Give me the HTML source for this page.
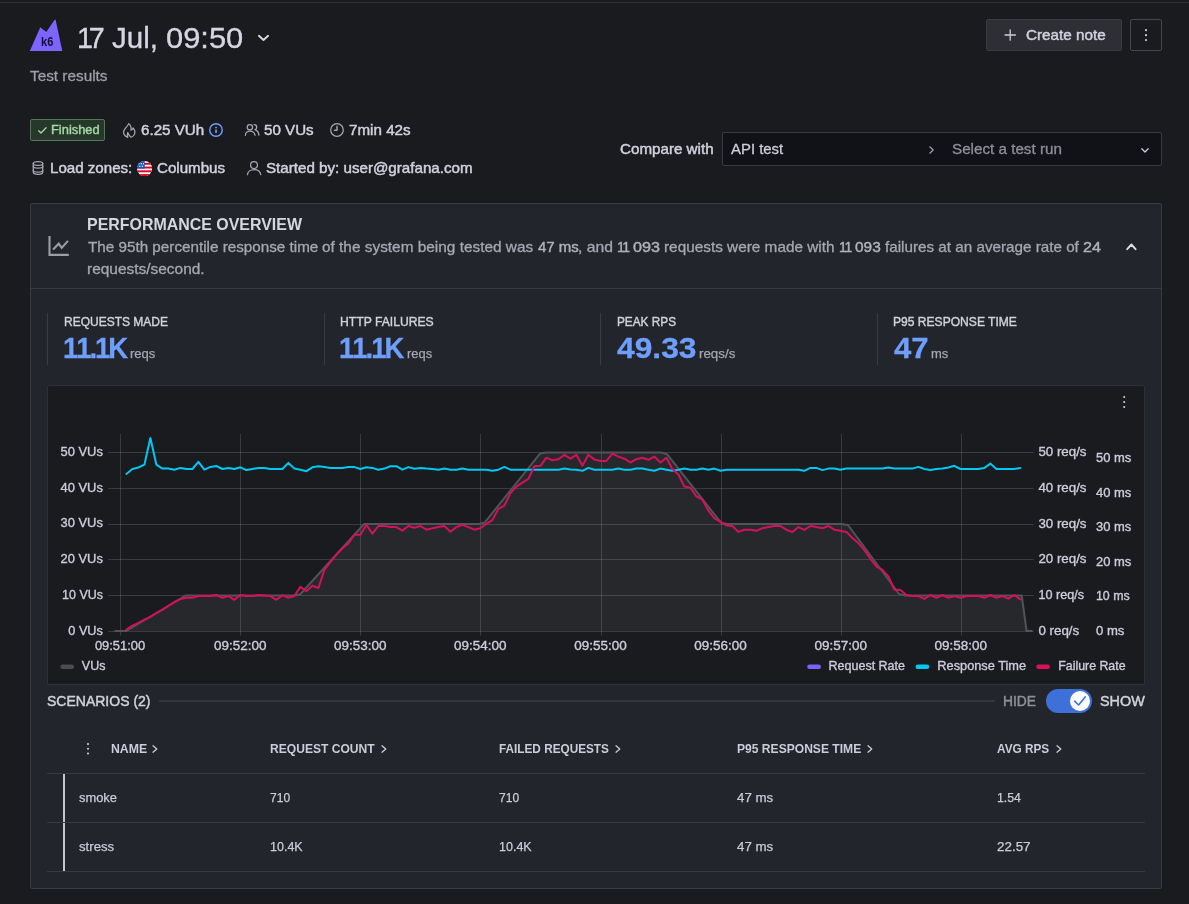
<!DOCTYPE html>
<html lang="en"><head><meta charset="utf-8"><title>Test results</title>
<style>
*{box-sizing:border-box;margin:0;padding:0}
html,body{width:1189px;height:904px;overflow:hidden}
body{background:#1a1b1f;font-family:"Liberation Sans",sans-serif;color:#ccccdc;position:relative;font-size:14px}
.a{position:absolute;white-space:nowrap;line-height:1}
.sec{color:#9d9ea9}
.b{font-weight:700}
svg{position:absolute;overflow:visible}
.ic{fill:none;stroke:#b4b5c2;stroke-width:1.3;stroke-linecap:round;stroke-linejoin:round}
.ax{font-size:12.7px;fill:#ccccdc;stroke:#ccccdc;stroke-width:0.35px;font-family:"Liberation Sans",sans-serif}
.th{font-size:12px;font-weight:700;color:#ccccdc;letter-spacing:.1px}
.td{font-size:12px;color:#ccccdc}
</style></head>
<body>
<div id="root" style="position:absolute;left:0;top:0;width:1189px;height:904px;will-change:transform">
<div class="a" style="left:0;top:2px;width:1189px;height:1px;background:#2f3137"></div>
<svg style="left:30px;top:20px" width="32" height="31" viewBox="0 0 32 31">
<path d="M-0.2 31 L10.3 7.2 L16.3 11.9 L24.6 -0.2 L25.6 -0.2 L32.3 31 Z" fill="#7d64ff"/>
<text x="11" y="25.6" textLength="12.3" lengthAdjust="spacingAndGlyphs" font-family="Liberation Sans, sans-serif" font-weight="700" font-size="13" fill="#15102e">k6</text>
</svg>
<div class="a" style="left:77.22px;top:22.90px;font-size:29.6px;color:#d5d6e2;transform-origin:0 0;transform:scaleX(0.9700);-webkit-text-stroke:0.35px #d5d6e2;">1<span style="margin-left:-4.29px">7</span></div>
<div class="a" style="left:111.72px;top:22.90px;font-size:29.6px;color:#d5d6e2;transform-origin:0 0;transform:scaleX(0.9984);-webkit-text-stroke:0.35px #d5d6e2;">Jul, </div>
<div class="a" style="left:165.92px;top:22.90px;font-size:29.6px;color:#d5d6e2;transform-origin:0 0;transform:scaleX(1.0432);-webkit-text-stroke:0.35px #d5d6e2;">09:50</div>
<svg style="left:258px;top:35px" width="11" height="6" viewBox="0 0 11 6"><path d="M0.900 0.800 L5.500 5 L10.100 0.800" fill="none" stroke="#d5d6e2" stroke-width="1.900" stroke-linecap="round" stroke-linejoin="round"/></svg>
<div class="a" style="left:30.21px;top:68.80px;font-size:14.8px;color:#9d9ea9;transform-origin:0 0;transform:scaleX(1.0359);-webkit-text-stroke:0.30px #9d9ea9;">Test results</div>
<div class="a" style="left:986px;top:19px;width:136px;height:32px;background:#2e2f35;border:1px solid #3a3b41;border-radius:2px"></div>
<svg style="left:1004px;top:29.200px" width="12" height="12" viewBox="0 0 12 12"><path d="M6.200 0.800V11.200M1 6H11.400" fill="none" stroke="#ccccdc" stroke-width="1.3" stroke-linecap="round"/></svg>
<div class="a" style="left:1026.01px;top:28.00px;font-size:14.8px;color:#d0d1dd;transform-origin:0 0;transform:scaleX(1.0323);-webkit-text-stroke:0.47px #d0d1dd;">Create note</div>
<div class="a" style="left:1130px;top:19px;width:32px;height:32px;border:1px solid #46474e;border-radius:2px"></div>
<svg style="left:1145px;top:29px" width="2" height="12" viewBox="0 0 2 12"><circle cx="1" cy="1.2" r="1.1" fill="#ccccdc"/><circle cx="1" cy="6.2" r="1.1" fill="#ccccdc"/><circle cx="1" cy="11.1" r="1.1" fill="#ccccdc"/></svg>
<div class="a" style="left:30px;top:119px;width:75px;height:22px;background:#27372b;border:1px solid #4b7a4e;border-radius:2px"></div>
<svg style="left:37.900px;top:126.600px" width="9" height="8" viewBox="0 0 9 8"><path d="M0.700 3.700 L3 6 L8.100 0.700" fill="none" stroke="#a3dba3" stroke-width="1.250" stroke-linecap="round" stroke-linejoin="round"/></svg>
<div class="a" style="left:50.79px;top:124.00px;font-size:12.68px;color:#a3dba3;transform-origin:0 0;transform:scaleX(1.0158);-webkit-text-stroke:0.41px #a3dba3;">Finished</div>
<div class="a" style="left:140.51px;top:122.80px;font-size:14.8px;color:#d0d1dd;transform-origin:0 0;transform:scaleX(1.0247);-webkit-text-stroke:0.47px #d0d1dd;">6.25 VUh</div>
<div class="a" style="left:263.91px;top:122.80px;font-size:14.8px;color:#d0d1dd;transform-origin:0 0;transform:scaleX(1.0227);-webkit-text-stroke:0.47px #d0d1dd;">50 VUs</div>
<div class="a" style="left:349.21px;top:122.80px;font-size:14.8px;color:#d0d1dd;transform-origin:0 0;transform:scaleX(1.0263);-webkit-text-stroke:0.47px #d0d1dd;">7min 42s</div>
<svg style="left:0;top:0" width="1189" height="904" viewBox="0 0 1189 904">
<g fill="none" stroke="#a6a7b4" stroke-width="1.25" stroke-linecap="round" stroke-linejoin="round">
<path transform="translate(123.3,123.1)" d="M5.4 0.5C4.6 2.6 2.6 4.2 1.3 6.200C0.100 8 0.100 10.400 1.300 12C2.100 13.100 3.300 13.800 4.500 14.200C3.900 12.600 3.900 10.800 4.500 9.400C4.900 10.900 5.700 12.200 7 13.400L7.900 14.100C9.600 13.700 10.900 12.400 11.400 10.600C11.900 8.600 11.300 6.400 9.800 4.900C9.400 5.900 8.800 6.700 7.700 7.200C8.200 4.800 7.400 2.300 5.400 0.500Z"/>
<circle cx="249.900" cy="127.200" r="2.650"/>
<path d="M245.400 135.300C245.400 132.800 247.400 131 249.900 131S254.800 132.800 255 135.300"/>
<path d="M254.100 124.700C255.600 124.700 256.700 125.800 256.700 127.200 256.700 128.400 256 129.300 255 129.700 257.200 130.600 258.700 132.500 258.900 135.100"/>
<circle cx="337" cy="130" r="6.300"/>
<path d="M337 126.300V130.200H334.500" stroke-width="1.400"/>
<ellipse cx="38" cy="163.400" rx="4.750" ry="1.900"/>
<path d="M33.250 163.400V172.300C33.250 173.400 35.400 174.300 38 174.300S42.750 173.400 42.750 172.300V163.400"/>
<path d="M33.250 166.300C33.250 167.400 35.400 168.200 38 168.200S42.750 167.400 42.750 166.300"/>
<path d="M33.250 170.200C33.250 171.300 35.400 172.100 38 172.100S42.750 171.300 42.750 170.200"/>
<circle cx="254" cy="165.100" r="3.450"/>
<path d="M247.500 174.600C247.700 171.600 250.500 169.600 254 169.600S260.300 171.600 260.700 174.600"/>
</g>
<circle cx="216" cy="130" r="6.250" fill="none" stroke="#6e9fff" stroke-width="1.400"/>
<rect x="215.200" y="129.400" width="1.700" height="3.700" rx="0.500" fill="#6e9fff"/><circle cx="216.050" cy="127.600" r="0.950" fill="#6e9fff"/>
</svg>
<div class="a" style="left:49.71px;top:160.71px;font-size:14.8px;color:#d0d1dd;transform-origin:0 0;transform:scaleX(1.0210);-webkit-text-stroke:0.47px #d0d1dd;">Load zones:</div>
<svg style="left:136.900px;top:160.900px" width="15.200" height="15.200" viewBox="0 0 15.200 15.200"><defs><clipPath id="fc"><circle cx="7.600" cy="7.600" r="7.600"/></clipPath></defs>
<g clip-path="url(#fc)"><rect width="15.200" height="15.200" fill="#f4f4f4"/>
<rect y="1.850" width="15.200" height="1.900" fill="#e0001f"/><rect y="5.600" width="15.200" height="1.900" fill="#e0001f"/><rect y="9.350" width="15.200" height="1.900" fill="#e0001f"/><rect y="13.100" width="15.200" height="2.100" fill="#e0001f"/>
<rect width="7.700" height="7.550" fill="#1256c4"/><rect x="1.300" y="2" width="1.300" height="1.300" fill="#e8eefa"/><rect x="3.800" y="2" width="1.300" height="1.300" fill="#e8eefa"/><rect x="6" y="2" width="1" height="1.300" fill="#e8eefa"/><rect x="2.200" y="4.600" width="1.300" height="1.300" fill="#e8eefa"/><rect x="4.800" y="4.600" width="1.300" height="1.300" fill="#e8eefa"/></g></svg>
<div class="a" style="left:157.31px;top:160.71px;font-size:14.8px;color:#d0d1dd;transform-origin:0 0;transform:scaleX(1.0211);-webkit-text-stroke:0.47px #d0d1dd;">Columbus</div>
<div class="a" style="left:266.11px;top:160.71px;font-size:14.8px;color:#d0d1dd;transform-origin:0 0;transform:scaleX(1.0241);-webkit-text-stroke:0.47px #d0d1dd;">Started by: user@grafana.com</div>
<div class="a" style="left:620.11px;top:142.10px;font-size:14.8px;color:#d0d1dd;transform-origin:0 0;transform:scaleX(1.0255);-webkit-text-stroke:0.47px #d0d1dd;">Compare with</div>
<div class="a" style="left:722px;top:132px;width:440px;height:34px;background:#111217;border:1px solid #3a3b42;border-radius:2px"></div>
<div class="a" style="left:730.61px;top:142.10px;font-size:14.8px;color:#ccccdc;transform-origin:0 0;transform:scaleX(1.0080);-webkit-text-stroke:0.30px #ccccdc;">API test</div>
<svg style="left:929px;top:146px" width="5" height="8" viewBox="0 0 5 8"><path d="M0.800 0.800L4.200 4 0.800 7.200" fill="none" stroke="#9d9ea9" stroke-width="1.200" stroke-linecap="round" stroke-linejoin="round"/></svg>
<div class="a" style="left:951.71px;top:142.10px;font-size:14.8px;color:#8e8f9a;transform-origin:0 0;transform:scaleX(1.0279);-webkit-text-stroke:0.30px #8e8f9a;">Select a test run</div>
<svg style="left:1141px;top:148px" width="8" height="5" viewBox="0 0 8 5"><path d="M0.800 0.800L4 4 7.200 0.800" fill="none" stroke="#ccccdc" stroke-width="1.300" stroke-linecap="round" stroke-linejoin="round"/></svg>
<div class="a" style="left:30px;top:203px;width:1132px;height:686px;background:#22252b;border:1px solid #383b42;border-radius:2px"></div>
<div class="a" style="left:31px;top:288px;width:1130px;height:1px;background:#373940"></div>
<svg style="left:0;top:0" width="1189" height="904" viewBox="0 0 1189 904"><g fill="none" stroke="#9c9da9" stroke-width="2.100"><path d="M49.500 236.100V254.850H68.800"/><path d="M53.800 248.700L58.700 243.700 61.700 247.900 67.300 241.700" stroke-linecap="square"/></g></svg>
<div class="a" style="left:86.92px;top:217.21px;font-size:16.91px;color:#d5d6e2;transform-origin:0 0;transform:scaleX(0.9429);font-weight:700;">PERFORMANCE OVERVIEW</div>
<div class="a" style="left:87.51px;top:240.00px;font-size:14.8px;color:#a6a7b3;transform-origin:0 0;transform:scaleX(1.0295);-webkit-text-stroke:0.30px #a6a7b3;">The 95th percentile response time </div>
<div class="a" style="left:322.11px;top:240.00px;font-size:14.8px;color:#a6a7b3;transform-origin:0 0;transform:scaleX(1.0395);-webkit-text-stroke:0.30px #a6a7b3;">of the system being tested was </div>
<div class="a" style="left:537.61px;top:240.00px;font-size:14.8px;color:#b0b1bd;transform-origin:0 0;transform:scaleX(1.0132);-webkit-text-stroke:0.44px #b0b1bd;">47 ms</div>
<div class="a" style="left:578.01px;top:240.00px;font-size:14.8px;color:#a6a7b3;transform-origin:0 0;transform:scaleX(1.0613);-webkit-text-stroke:0.30px #a6a7b3;">, and </div>
<div class="a" style="left:617.31px;top:240.00px;font-size:14.8px;color:#b0b1bd;transform-origin:0 0;transform:scaleX(0.9500);-webkit-text-stroke:0.44px #b0b1bd;">1<span style="margin-left:-2.69px">1</span></div>
<div class="a" style="left:632.61px;top:240.00px;font-size:14.8px;color:#b0b1bd;transform-origin:0 0;transform:scaleX(1.0948);-webkit-text-stroke:0.44px #b0b1bd;">093</div>
<div class="a" style="left:663.91px;top:240.00px;font-size:14.8px;color:#a6a7b3;transform-origin:0 0;transform:scaleX(1.0366);-webkit-text-stroke:0.30px #a6a7b3;">requests were made with </div>
<div class="a" style="left:838.71px;top:240.00px;font-size:14.8px;color:#b0b1bd;transform-origin:0 0;transform:scaleX(0.9500);-webkit-text-stroke:0.44px #b0b1bd;">1<span style="margin-left:-2.48px">1</span></div>
<div class="a" style="left:854.71px;top:240.00px;font-size:14.8px;color:#b0b1bd;transform-origin:0 0;transform:scaleX(1.0422);-webkit-text-stroke:0.44px #b0b1bd;">093</div>
<div class="a" style="left:884.61px;top:240.00px;font-size:14.8px;color:#a6a7b3;transform-origin:0 0;transform:scaleX(1.0290);-webkit-text-stroke:0.30px #a6a7b3;">failures at an average rate of </div>
<div class="a" style="left:1082.71px;top:240.00px;font-size:14.8px;color:#b0b1bd;transform-origin:0 0;transform:scaleX(1.0895);-webkit-text-stroke:0.44px #b0b1bd;">24</div>
<div class="a" style="left:87.01px;top:261.71px;font-size:14.8px;color:#a6a7b3;transform-origin:0 0;transform:scaleX(1.0437);-webkit-text-stroke:0.30px #a6a7b3;">requests/second.</div>
<svg style="left:1125.500px;top:243px" width="11" height="7.500" viewBox="0 0 11 7.500"><path d="M1.200 6.200L5.400 1.500 9.600 6.200" fill="none" stroke="#dcdde8" stroke-width="1.900" stroke-linecap="round" stroke-linejoin="round"/></svg>
<div class="a" style="left:47px;top:313px;width:1px;height:52px;background:#393b42"></div>
<div class="a" style="left:63.79px;top:315.81px;font-size:12.68px;color:#d0d1dd;transform-origin:0 0;transform:scaleX(0.9470);-webkit-text-stroke:0.41px #d0d1dd;">REQUESTS MADE</div>
<div class="a" style="left:62.82px;top:332.90px;font-size:29.6px;color:#6e9fff;transform-origin:0 0;transform:scaleX(0.9300);font-weight:700;-webkit-text-stroke:0.3px #6e9fff;">1<span style="margin-left:-2.22px">1</span><span style="margin-left:-2.22px">.</span><span style="margin-left:-2.22px">1</span><span style="margin-left:-2.22px">K</span></div>
<div class="a" style="left:130.39px;top:347.81px;font-size:12.68px;color:#a6a7b3;transform-origin:0 0;transform:scaleX(1.0292);-webkit-text-stroke:0.25px #a6a7b3;">reqs</div>
<div class="a" style="left:324px;top:313px;width:1px;height:52px;background:#393b42"></div>
<div class="a" style="left:340.19px;top:315.81px;font-size:12.68px;color:#d0d1dd;transform-origin:0 0;transform:scaleX(0.9599);-webkit-text-stroke:0.41px #d0d1dd;">HTTP FAILURES</div>
<div class="a" style="left:338.82px;top:332.90px;font-size:29.6px;color:#6e9fff;transform-origin:0 0;transform:scaleX(0.9300);font-weight:700;-webkit-text-stroke:0.3px #6e9fff;">1<span style="margin-left:-2.17px">1</span><span style="margin-left:-2.17px">.</span><span style="margin-left:-2.17px">1</span><span style="margin-left:-2.17px">K</span></div>
<div class="a" style="left:407.09px;top:347.81px;font-size:12.68px;color:#a6a7b3;transform-origin:0 0;transform:scaleX(1.0170);-webkit-text-stroke:0.25px #a6a7b3;">reqs</div>
<div class="a" style="left:600px;top:313px;width:1px;height:52px;background:#393b42"></div>
<div class="a" style="left:616.79px;top:315.81px;font-size:12.68px;color:#d0d1dd;transform-origin:0 0;transform:scaleX(0.9316);-webkit-text-stroke:0.41px #d0d1dd;">PEAK RPS</div>
<div class="a" style="left:617.32px;top:332.90px;font-size:29.6px;color:#6e9fff;transform-origin:0 0;transform:scaleX(1.0742);font-weight:700;-webkit-text-stroke:0.3px #6e9fff;">49.33</div>
<div class="a" style="left:699.29px;top:347.81px;font-size:12.68px;color:#a6a7b3;transform-origin:0 0;transform:scaleX(1.0538);-webkit-text-stroke:0.25px #a6a7b3;">reqs/s</div>
<div class="a" style="left:877px;top:313px;width:1px;height:52px;background:#393b42"></div>
<div class="a" style="left:893.49px;top:315.81px;font-size:12.68px;color:#d0d1dd;transform-origin:0 0;transform:scaleX(0.9528);-webkit-text-stroke:0.41px #d0d1dd;">P95 RESPONSE TIME</div>
<div class="a" style="left:894.32px;top:332.90px;font-size:29.6px;color:#6e9fff;transform-origin:0 0;transform:scaleX(1.0500);font-weight:700;-webkit-text-stroke:0.3px #6e9fff;">47</div>
<div class="a" style="left:931.29px;top:347.81px;font-size:12.68px;color:#a6a7b3;transform-origin:0 0;transform:scaleX(1.0228);-webkit-text-stroke:0.25px #a6a7b3;">ms</div>
<div class="a" style="left:47px;top:385px;width:1098px;height:300px;background:#1a1b1f;border:1px solid #2f3137;border-radius:2px"></div>
<svg style="left:0;top:0" width="1189" height="904" viewBox="0 0 1189 904">
<path d="M114.4,631.0 L126.4,631.0 L185.6,595.5 L294,595.5 L300,594.5 L364.1,524.0 L479.5,524.0 L485,522.2 L540,453.6 L546,452.4 L660.7,452.4 L667,454.2 L721,522.7 L727,524.0 L841.4,524.0 L848,525 L899,594 L905,595.5 L1021.7,595.5 L1026.6,631.0 L1032.6,631.0 L1032.6,631.0 L114.4,631.0 Z" fill="#27282c"/>
<rect x="108" y="631" width="925.500" height="1" fill="#ffffff" fill-opacity="0.14"/>
<rect x="108" y="595" width="925.500" height="1" fill="#ffffff" fill-opacity="0.14"/>
<rect x="108" y="559" width="925.500" height="1" fill="#ffffff" fill-opacity="0.14"/>
<rect x="108" y="524" width="925.500" height="1" fill="#ffffff" fill-opacity="0.14"/>
<rect x="108" y="488" width="925.500" height="1" fill="#ffffff" fill-opacity="0.14"/>
<rect x="108" y="452" width="925.500" height="1" fill="#ffffff" fill-opacity="0.14"/>
<rect x="120" y="434" width="1" height="201.500" fill="#ffffff" fill-opacity="0.14"/>
<rect x="240" y="434" width="1" height="201.500" fill="#ffffff" fill-opacity="0.14"/>
<rect x="360" y="434" width="1" height="201.500" fill="#ffffff" fill-opacity="0.14"/>
<rect x="480" y="434" width="1" height="201.500" fill="#ffffff" fill-opacity="0.14"/>
<rect x="601" y="434" width="1" height="201.500" fill="#ffffff" fill-opacity="0.14"/>
<rect x="721" y="434" width="1" height="201.500" fill="#ffffff" fill-opacity="0.14"/>
<rect x="841" y="434" width="1" height="201.500" fill="#ffffff" fill-opacity="0.14"/>
<rect x="961" y="434" width="1" height="201.500" fill="#ffffff" fill-opacity="0.14"/>
<path d="M114.4,631.0 L126.4,631.0 L185.6,595.5 L294,595.5 L300,594.5 L364.1,524.0 L479.5,524.0 L485,522.2 L540,453.6 L546,452.4 L660.7,452.4 L667,454.2 L721,522.7 L727,524.0 L841.4,524.0 L848,525 L899,594 L905,595.5 L1021.7,595.5 L1026.6,631.0 L1032.6,631.0" fill="none" stroke="#525357" stroke-width="2" stroke-linejoin="round"/>
<path d="M126.4,473.9 L132.4,469.0 L138.4,467.5 L144.4,464.7 L150.4,437.9 L156.4,464.7 L162.4,468.6 L168.4,468.6 L174.4,469.7 L180.4,467.9 L186.4,469.0 L192.4,469.0 L198.4,461.8 L204.4,469.7 L210.4,466.9 L216.4,466.0 L222.4,469.0 L228.4,467.9 L234.4,469.0 L240.4,467.3 L246.4,470.1 L252.4,469.0 L258.4,467.9 L264.4,467.9 L270.4,469.0 L276.4,469.0 L282.4,469.0 L288.4,462.9 L294.4,468.6 L300.4,469.7 L306.4,471.2 L312.4,467.3 L318.4,466.2 L324.4,466.9 L330.4,467.9 L336.4,467.9 L342.4,467.9 L348.4,467.1 L354.4,467.1 L360.4,469.0 L366.4,467.3 L372.4,467.9 L378.4,469.7 L384.4,468.6 L390.4,466.2 L396.4,466.2 L402.4,469.7 L408.4,467.1 L414.4,468.8 L420.4,467.9 L426.4,468.6 L432.4,469.0 L438.4,469.7 L444.4,468.6 L450.4,469.7 L456.4,469.7 L462.4,468.6 L468.4,469.7 L474.4,469.7 L480.4,469.7 L486.4,469.7 L492.4,470.8 L498.4,469.7 L504.4,466.9 L510.4,469.7 L516.4,469.7 L522.4,469.7 L528.4,469.7 L534.4,469.7 L540.4,469.7 L546.4,469.7 L552.4,469.7 L558.4,469.7 L564.4,468.6 L570.4,469.5 L576.4,469.7 L582.4,470.8 L588.4,467.9 L594.4,469.7 L600.4,469.7 L606.4,469.7 L612.4,469.7 L618.4,468.6 L624.4,469.7 L630.4,469.7 L636.4,468.6 L642.4,468.6 L648.4,469.7 L654.4,470.8 L660.4,468.6 L666.4,469.7 L672.4,470.8 L678.4,469.7 L684.4,468.6 L690.4,469.7 L696.4,469.7 L702.4,468.6 L708.4,469.7 L714.4,468.6 L720.4,470.8 L726.4,469.7 L732.4,469.7 L738.4,469.7 L744.4,469.7 L750.4,469.7 L756.4,469.7 L762.4,469.7 L768.4,469.7 L774.4,469.7 L780.4,469.7 L786.4,469.7 L792.4,469.7 L798.4,469.7 L804.4,470.8 L810.4,467.9 L816.4,467.9 L822.4,470.1 L828.4,468.6 L834.4,468.6 L840.4,469.7 L846.4,468.6 L852.4,468.6 L858.4,468.6 L864.4,468.6 L870.4,468.6 L876.4,468.6 L882.4,468.6 L888.4,467.5 L894.4,468.6 L900.4,468.6 L906.4,468.6 L912.4,468.6 L918.4,466.9 L924.4,469.0 L930.4,470.1 L936.4,469.0 L942.4,468.6 L948.4,467.5 L954.4,465.8 L960.4,469.0 L966.4,469.0 L972.4,469.0 L978.4,469.0 L984.4,467.9 L990.4,463.6 L996.4,469.0 L1002.4,469.0 L1008.4,469.0 L1014.4,469.0 L1020.4,467.9" fill="none" stroke="#00c8f2" stroke-width="2" stroke-linejoin="round" stroke-linecap="round"/>
<path d="M126.4,629.6 L132.4,625.6 L138.4,622.8 L144.4,619.7 L150.4,616.9 L156.4,613.2 L162.4,609.9 L168.4,605.9 L174.4,602.0 L180.4,599.1 L186.4,597.8 L192.4,597.8 L198.4,596.1 L204.4,596.1 L210.4,596.1 L216.4,595.0 L222.4,597.8 L228.4,596.1 L234.4,599.8 L240.4,595.0 L246.4,596.1 L252.4,596.1 L258.4,595.0 L264.4,595.6 L270.4,596.1 L276.4,599.8 L282.4,595.2 L288.4,597.8 L294.4,596.1 L300.4,586.9 L306.4,591.2 L312.4,585.8 L318.4,588.0 L324.4,569.8 L330.4,562.1 L336.4,554.5 L342.4,548.3 L348.4,543.5 L354.4,534.7 L360.4,534.7 L366.4,524.9 L372.4,533.6 L378.4,526.0 L384.4,526.0 L390.4,527.1 L396.4,527.1 L402.4,530.6 L408.4,526.0 L414.4,527.7 L420.4,526.0 L426.4,529.7 L432.4,528.2 L438.4,527.1 L444.4,526.0 L450.4,531.7 L456.4,527.1 L462.4,524.9 L468.4,527.1 L474.4,529.7 L480.4,528.2 L486.4,523.8 L492.4,520.1 L498.4,508.9 L504.4,505.6 L510.4,493.1 L516.4,486.6 L522.4,482.6 L528.4,478.9 L534.4,466.2 L540.4,465.8 L546.4,457.7 L552.4,460.3 L558.4,459.2 L564.4,454.8 L570.4,458.7 L576.4,454.8 L582.4,465.8 L588.4,454.8 L594.4,459.6 L600.4,460.9 L606.4,460.9 L612.4,453.7 L618.4,456.6 L624.4,458.7 L630.4,462.5 L636.4,459.2 L642.4,457.7 L648.4,459.8 L654.4,456.6 L660.4,462.5 L666.4,457.7 L672.4,469.0 L678.4,474.5 L684.4,486.6 L690.4,487.7 L696.4,496.4 L702.4,499.7 L708.4,510.7 L714.4,518.3 L720.4,521.6 L726.4,525.5 L732.4,526.0 L738.4,531.9 L744.4,529.7 L750.4,529.7 L756.4,530.8 L762.4,528.2 L768.4,527.1 L774.4,526.0 L780.4,526.0 L786.4,529.7 L792.4,532.1 L798.4,527.1 L804.4,529.9 L810.4,526.0 L816.4,527.1 L822.4,528.2 L828.4,526.0 L834.4,529.7 L840.4,530.8 L846.4,531.9 L852.4,538.0 L858.4,543.1 L864.4,550.1 L870.4,558.8 L876.4,566.5 L882.4,569.8 L888.4,576.4 L894.4,589.5 L900.4,589.9 L906.4,595.0 L912.4,596.1 L918.4,596.1 L924.4,598.9 L930.4,595.0 L936.4,597.8 L942.4,595.0 L948.4,597.8 L954.4,596.1 L960.4,597.8 L966.4,596.1 L972.4,596.1 L978.4,596.1 L984.4,597.8 L990.4,595.0 L996.4,597.8 L1002.4,596.1 L1008.4,598.7 L1014.4,595.0 L1020.4,599.4" fill="none" stroke="#d6105c" stroke-width="2" stroke-linejoin="round" stroke-linecap="round"/>
<text class="ax" x="68.3" y="634.8" textLength="34.6" lengthAdjust="spacingAndGlyphs">0 VUs</text>
<text class="ax" x="1038.4" y="634.9" textLength="40.8" lengthAdjust="spacingAndGlyphs">0 req/s</text>
<text class="ax" x="1096.0" y="634.9" textLength="28.4" lengthAdjust="spacingAndGlyphs">0 ms</text>
<text class="ax" x="62.1" y="599.0" textLength="40.8" lengthAdjust="spacingAndGlyphs">10 VUs</text>
<text class="ax" x="1038.4" y="599.1" textLength="45.6" lengthAdjust="spacingAndGlyphs">10 req/s</text>
<text class="ax" x="1096.0" y="600.3" textLength="33.6" lengthAdjust="spacingAndGlyphs">10 ms</text>
<text class="ax" x="60.5" y="563.2" textLength="42.4" lengthAdjust="spacingAndGlyphs">20 VUs</text>
<text class="ax" x="1038.4" y="563.3" textLength="48.1" lengthAdjust="spacingAndGlyphs">20 req/s</text>
<text class="ax" x="1096.0" y="565.8" textLength="35.3" lengthAdjust="spacingAndGlyphs">20 ms</text>
<text class="ax" x="60.5" y="527.4" textLength="42.4" lengthAdjust="spacingAndGlyphs">30 VUs</text>
<text class="ax" x="1038.4" y="527.5" textLength="48.1" lengthAdjust="spacingAndGlyphs">30 req/s</text>
<text class="ax" x="1096.0" y="531.2" textLength="35.3" lengthAdjust="spacingAndGlyphs">30 ms</text>
<text class="ax" x="60.5" y="491.6" textLength="42.4" lengthAdjust="spacingAndGlyphs">40 VUs</text>
<text class="ax" x="1038.4" y="491.7" textLength="48.1" lengthAdjust="spacingAndGlyphs">40 req/s</text>
<text class="ax" x="1096.0" y="496.7" textLength="35.3" lengthAdjust="spacingAndGlyphs">40 ms</text>
<text class="ax" x="60.5" y="455.8" textLength="42.4" lengthAdjust="spacingAndGlyphs">50 VUs</text>
<text class="ax" x="1038.4" y="455.9" textLength="48.1" lengthAdjust="spacingAndGlyphs">50 req/s</text>
<text class="ax" x="1096.0" y="462.1" textLength="35.3" lengthAdjust="spacingAndGlyphs">50 ms</text>
<text class="ax" x="94.9" y="649.9" textLength="50.3" lengthAdjust="spacingAndGlyphs">09:51:00</text>
<text class="ax" x="213.9" y="649.9" textLength="52.5" lengthAdjust="spacingAndGlyphs">09:52:00</text>
<text class="ax" x="334.0" y="649.9" textLength="52.5" lengthAdjust="spacingAndGlyphs">09:53:00</text>
<text class="ax" x="454.1" y="649.9" textLength="52.5" lengthAdjust="spacingAndGlyphs">09:54:00</text>
<text class="ax" x="574.2" y="649.9" textLength="52.5" lengthAdjust="spacingAndGlyphs">09:55:00</text>
<text class="ax" x="694.3" y="649.9" textLength="52.5" lengthAdjust="spacingAndGlyphs">09:56:00</text>
<text class="ax" x="814.4" y="649.9" textLength="52.5" lengthAdjust="spacingAndGlyphs">09:57:00</text>
<text class="ax" x="934.5" y="649.9" textLength="52.5" lengthAdjust="spacingAndGlyphs">09:58:00</text>
<rect x="60.3" y="664.400" width="13.800" height="4.600" rx="2.300" fill="#4b4c50"/><text class="ax" x="81.8" y="670.0" textLength="23.6" lengthAdjust="spacingAndGlyphs">VUs</text>
<rect x="807.2" y="664.400" width="13.800" height="4.600" rx="2.300" fill="#7b61ff"/><text class="ax" x="828.6" y="670.0" textLength="76.4" lengthAdjust="spacingAndGlyphs">Request Rate</text>
<rect x="915.5" y="664.400" width="13.800" height="4.600" rx="2.300" fill="#00c8f2"/><text class="ax" x="937.3" y="670.0" textLength="88.8" lengthAdjust="spacingAndGlyphs">Response Time</text>
<rect x="1036.2" y="664.400" width="13.800" height="4.600" rx="2.300" fill="#d6105c"/><text class="ax" x="1058.3" y="670.0" textLength="67.2" lengthAdjust="spacingAndGlyphs">Failure Rate</text>
<circle cx="1124.200" cy="397" r="1.050" fill="#ccccdc"/>
<circle cx="1124.200" cy="402" r="1.050" fill="#ccccdc"/>
<circle cx="1124.200" cy="407" r="1.050" fill="#ccccdc"/>
</svg>
<div class="a" style="left:46.71px;top:694.10px;font-size:14.8px;color:#d0d1dd;transform-origin:0 0;transform:scaleX(0.9466);-webkit-text-stroke:0.47px #d0d1dd;">SCENARIOS (2)</div>
<div class="a" style="left:159px;top:700px;width:836px;height:2px;background:#33363d"></div>
<div class="a" style="left:1003.01px;top:694.10px;font-size:14.8px;color:#8e8f9a;transform-origin:0 0;transform:scaleX(0.9343);-webkit-text-stroke:0.47px #8e8f9a;">HIDE</div>
<div class="a" style="left:1046px;top:689px;width:46px;height:24px;border-radius:12px;background:#3d71d9"></div>
<svg style="left:1070px;top:691.200px" width="20" height="20" viewBox="0 0 20 20"><circle cx="10" cy="10" r="10" fill="#ffffff"/><path d="M4.600 10.200L8.600 14 15.200 5.900" fill="none" stroke="#3d71d9" stroke-width="1.600" stroke-linecap="round" stroke-linejoin="round"/></svg>
<div class="a" style="left:1100.01px;top:694.10px;font-size:14.8px;color:#d0d1dd;transform-origin:0 0;transform:scaleX(0.9717);-webkit-text-stroke:0.47px #d0d1dd;">SHOW</div>
<svg style="left:87px;top:743px" width="2" height="12" viewBox="0 0 2 12"><circle cx="1" cy="1.100" r="1.050" fill="#ccccdc"/><circle cx="1" cy="5.800" r="1.050" fill="#ccccdc"/><circle cx="1" cy="10.500" r="1.050" fill="#ccccdc"/></svg>
<div class="a" style="left:110.89px;top:743.40px;font-size:12.68px;color:#ccccdc;transform-origin:0 0;transform:scaleX(0.9693);font-weight:700;">NAME</div>
<svg style="left:152.4px;top:745px" width="6" height="8" viewBox="0 0 6 8"><path d="M1 0.800L4.800 4 1 7.200" fill="none" stroke="#ccccdc" stroke-width="1.300" stroke-linecap="round" stroke-linejoin="round"/></svg>
<div class="a" style="left:269.59px;top:743.40px;font-size:12.68px;color:#ccccdc;transform-origin:0 0;transform:scaleX(0.9526);font-weight:700;">REQUEST COUNT</div>
<svg style="left:381px;top:745px" width="6" height="8" viewBox="0 0 6 8"><path d="M1 0.800L4.800 4 1 7.200" fill="none" stroke="#ccccdc" stroke-width="1.300" stroke-linecap="round" stroke-linejoin="round"/></svg>
<div class="a" style="left:498.99px;top:743.40px;font-size:12.68px;color:#ccccdc;transform-origin:0 0;transform:scaleX(0.9292);font-weight:700;">FAILED REQUESTS</div>
<svg style="left:615px;top:745px" width="6" height="8" viewBox="0 0 6 8"><path d="M1 0.800L4.800 4 1 7.200" fill="none" stroke="#ccccdc" stroke-width="1.300" stroke-linecap="round" stroke-linejoin="round"/></svg>
<div class="a" style="left:736.59px;top:743.40px;font-size:12.68px;color:#ccccdc;transform-origin:0 0;transform:scaleX(0.9534);font-weight:700;">P95 RESPONSE TIME</div>
<svg style="left:867px;top:745px" width="6" height="8" viewBox="0 0 6 8"><path d="M1 0.800L4.800 4 1 7.200" fill="none" stroke="#ccccdc" stroke-width="1.300" stroke-linecap="round" stroke-linejoin="round"/></svg>
<div class="a" style="left:997.09px;top:743.40px;font-size:12.68px;color:#ccccdc;transform-origin:0 0;transform:scaleX(0.9297);font-weight:700;">AVG RPS</div>
<svg style="left:1056px;top:745px" width="6" height="8" viewBox="0 0 6 8"><path d="M1 0.800L4.800 4 1 7.200" fill="none" stroke="#ccccdc" stroke-width="1.300" stroke-linecap="round" stroke-linejoin="round"/></svg>
<div class="a" style="left:47px;top:773px;width:1098px;height:1px;background:#373940"></div>
<div class="a" style="left:47px;top:822px;width:1098px;height:1px;background:#373940"></div>
<div class="a" style="left:47px;top:871px;width:1098px;height:1px;background:#373940"></div>
<div class="a" style="left:63px;top:774px;width:2px;height:48px;background:#c4c5d2"></div>
<div class="a" style="left:63px;top:823px;width:2px;height:48px;background:#c4c5d2"></div>
<div class="a" style="left:79.09px;top:792.40px;font-size:12.68px;color:#ccccdc;transform-origin:0 0;transform:scaleX(1.0171);-webkit-text-stroke:0.25px #ccccdc;">smoke</div>
<div class="a" style="left:269.59px;top:792.40px;font-size:12.68px;color:#ccccdc;transform-origin:0 0;transform:scaleX(0.9495);-webkit-text-stroke:0.25px #ccccdc;">710</div>
<div class="a" style="left:498.99px;top:792.40px;font-size:12.68px;color:#ccccdc;transform-origin:0 0;transform:scaleX(0.9495);-webkit-text-stroke:0.25px #ccccdc;">710</div>
<div class="a" style="left:736.59px;top:792.40px;font-size:12.68px;color:#ccccdc;transform-origin:0 0;transform:scaleX(1.0480);-webkit-text-stroke:0.25px #ccccdc;">47 ms</div>
<div class="a" style="left:997.09px;top:792.40px;font-size:12.68px;color:#ccccdc;transform-origin:0 0;transform:scaleX(0.9720);-webkit-text-stroke:0.25px #ccccdc;">1.54</div>
<div class="a" style="left:79.09px;top:841.40px;font-size:12.68px;color:#ccccdc;transform-origin:0 0;transform:scaleX(1.0405);-webkit-text-stroke:0.25px #ccccdc;">stress</div>
<div class="a" style="left:269.59px;top:841.40px;font-size:12.68px;color:#ccccdc;transform-origin:0 0;transform:scaleX(0.9864);-webkit-text-stroke:0.25px #ccccdc;">10.4K</div>
<div class="a" style="left:498.99px;top:841.40px;font-size:12.68px;color:#ccccdc;transform-origin:0 0;transform:scaleX(0.9864);-webkit-text-stroke:0.25px #ccccdc;">10.4K</div>
<div class="a" style="left:736.59px;top:841.40px;font-size:12.68px;color:#ccccdc;transform-origin:0 0;transform:scaleX(1.0480);-webkit-text-stroke:0.25px #ccccdc;">47 ms</div>
<div class="a" style="left:997.09px;top:841.40px;font-size:12.68px;color:#ccccdc;transform-origin:0 0;transform:scaleX(1.0585);-webkit-text-stroke:0.25px #ccccdc;">22.57</div>
</div>
</body></html>
